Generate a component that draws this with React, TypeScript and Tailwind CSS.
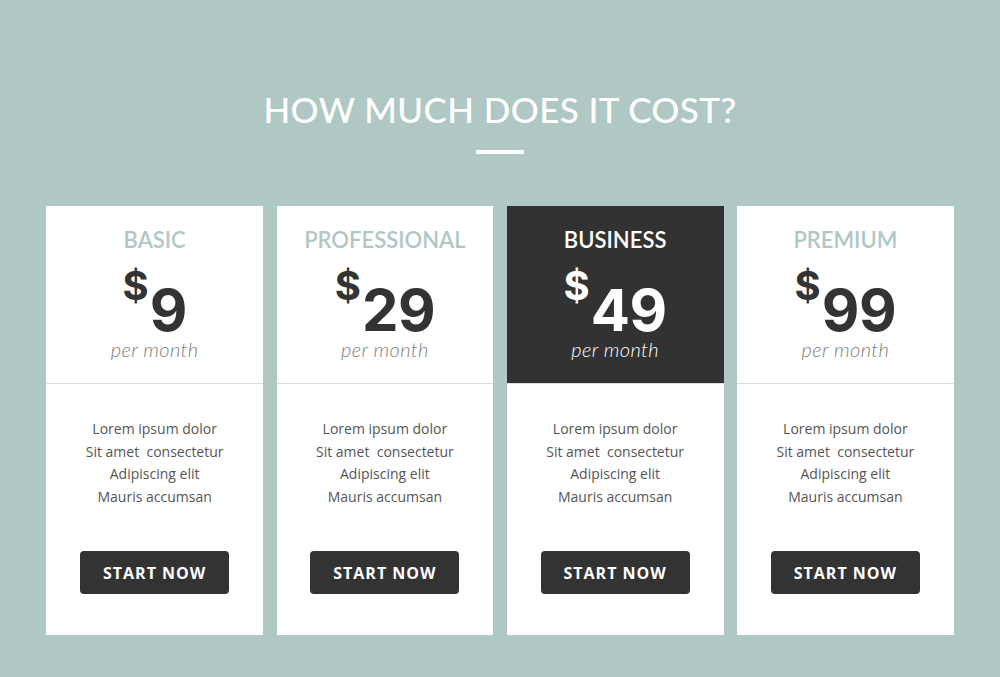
import React from "react";

const plans = [
  { name: "BASIC", price: "9", featured: false },
  { name: "PROFESSIONAL", price: "29", featured: false },
  { name: "BUSINESS", price: "49", featured: true },
  { name: "PREMIUM", price: "99", featured: false },
];

const features = ["Lorem ipsum dolor", "Sit amet\u00a0 consectetur", "Adipiscing elit", "Mauris accumsan"];

export default function App() {
  return (
    <div className="w-[1000px] h-[677px] bg-[#afc8c4] overflow-hidden flex flex-col items-center">
      <h1
        className="mt-[89px] text-[35px] leading-[40px] text-white font-medium tracking-[0.4px]"
        style={{ fontFamily: "Lato, 'Open Sans', sans-serif" }}
      >
        HOW MUCH DOES IT COST?
      </h1>
      <div className="mt-[21px] w-[48px] h-[4px] bg-white" />
      <div className="mt-[52px] flex gap-[13.5px]">
        {plans.map((p) => (
          <div key={p.name} className="w-[216.75px] h-[429px] bg-white flex flex-col">
            <div
              className={`h-[178px] flex flex-col items-center border-b border-[#dddddd] ${
                p.featured ? "bg-[#323232]" : ""
              }`}
            >
              <div
                className={`mt-[21px] text-[22px] leading-[26px] font-semibold ${
                  p.featured ? "text-white" : "text-[#afc8c4]"
                }`}
                style={{ fontFamily: "Lato, 'Open Sans', sans-serif" }}
              >
                {p.name}
              </div>
              <div
                className={`mt-[15px] flex items-start font-bold ${p.featured ? "text-white" : "text-[#333333]"}`}
                style={{ fontFamily: "Inter, 'Open Sans', sans-serif" }}
              >
                <span className="text-[40px] leading-[40px] mt-[-2px]">$</span>
                <span className="text-[58px] leading-[48px] mt-[18px] ml-[1px] tracking-[-0.5px]">{p.price}</span>
              </div>
              <div
                className={`mt-[3px] text-[20px] leading-[24px] italic font-light tracking-[0.4px] ${
                  p.featured ? "text-white" : "text-[#7d7d7d]"
                }`}
                style={{ fontFamily: "Lato, 'Open Sans', sans-serif" }}
              >
                per month
              </div>
            </div>
            <div
              className="flex-1 flex flex-col items-center pt-[34px]"
              style={{ fontFamily: "'Open Sans', sans-serif" }}
            >
              {features.map((f) => (
                <div key={f} className="text-[14px] leading-[22.6px] text-[#555555] whitespace-pre">
                  {f}
                </div>
              ))}
              <button className="mt-[43px] w-[149px] h-[43px] rounded-[4px] bg-[#333333] text-white font-bold text-[16px] tracking-[1px]">
                START NOW
              </button>
            </div>
          </div>
        ))}
      </div>
    </div>
  );
}
